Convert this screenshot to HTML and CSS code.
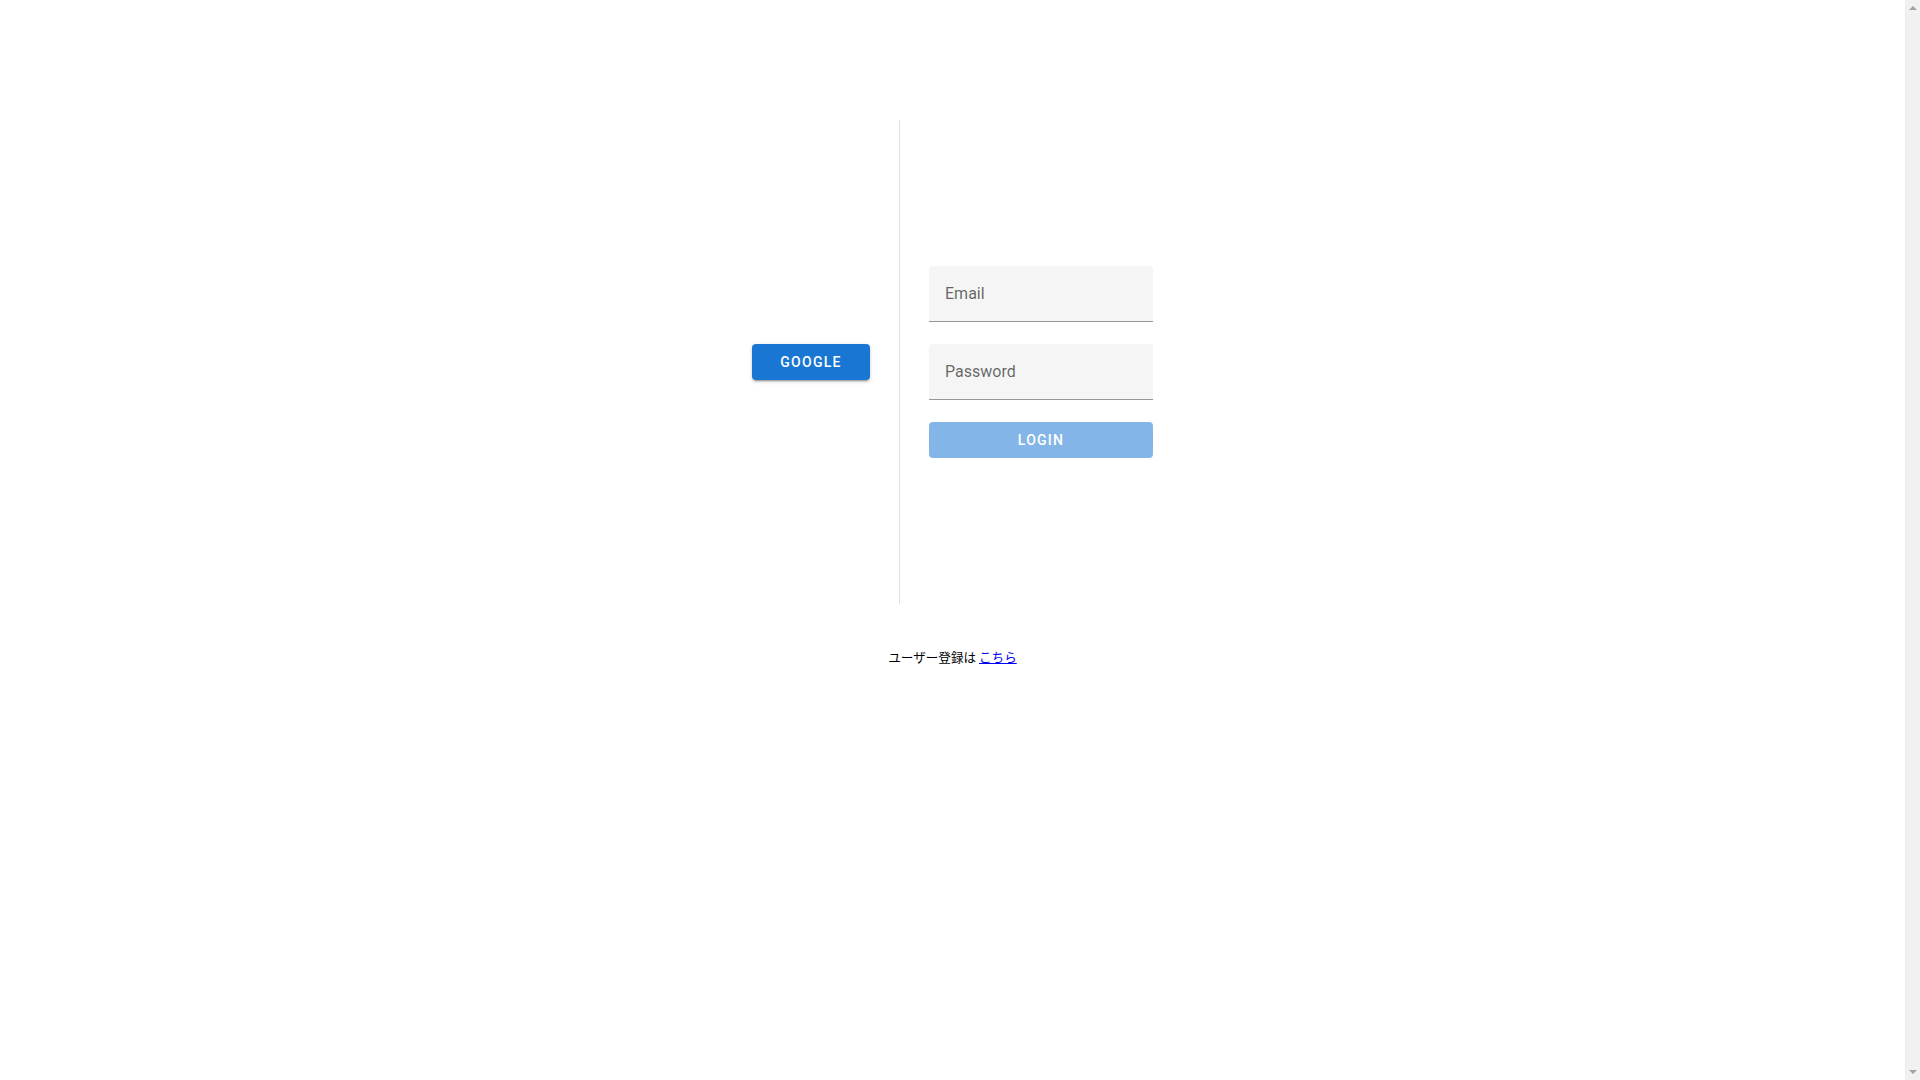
FILE: index.html
```html
<!DOCTYPE html>
<html lang="ja">
<head>
<meta charset="utf-8">
<title>Login</title>
<link rel="stylesheet" href="styles.css">
</head>
<body>
<div class="app">
  <div class="login-row">
    <div class="col-left">
      <button class="btn btn-google" type="button">Google</button>
    </div>
    <div class="divider"></div>
    <div class="col-right">
      <div class="field"><span class="label">Email</span></div>
      <div class="field"><span class="label">Password</span></div>
      <button class="btn btn-login" type="button">Login</button>
    </div>
  </div>
  <p class="register">ユーザー登録は <a href="#">こちら</a></p>
</div>
<div class="scrollbar">
  <span class="arrow arrow-up"></span>
  <span class="arrow arrow-down"></span>
</div>
</body>
</html>
```

FILE: styles.css
```css
html {
  overflow: hidden;
}
body {
  margin: 0;
  background: #ffffff;
  font-family: Roboto, "Noto Sans CJK JP", sans-serif;
}
.app {
  width: calc(100% - 15px);
  display: flex;
  flex-direction: column;
  align-items: center;
  padding-top: 120px;
}
.login-row {
  display: flex;
  align-items: center;
  height: 484px;
  gap: 29px;
}
.col-left {
  display: flex;
  justify-content: flex-end;
}
.divider {
  width: 1px;
  align-self: stretch;
  background: rgba(0, 0, 0, 0.12);
}
.col-right {
  width: 224px;
  display: flex;
  flex-direction: column;
}
.btn {
  height: 36px;
  border: none;
  border-radius: 4px;
  color: #ffffff;
  font-family: Roboto, sans-serif;
  font-weight: 500;
  font-size: 14px;
  letter-spacing: 1.25px;
  text-transform: uppercase;
  padding: 0 16px;
  cursor: pointer;
}
.btn-google {
  width: 118px;
  background: #1976d2;
  box-shadow: 0 3px 1px -2px rgba(0, 0, 0, 0.2), 0 2px 2px 0 rgba(0, 0, 0, 0.14), 0 1px 5px 0 rgba(0, 0, 0, 0.12);
}
.btn-login {
  width: 224px;
  margin-top: 22px;
  background: #84b5e8;
}
.field {
  height: 55px;
  background: #f5f5f5;
  border-radius: 4px 4px 0 0;
  border-bottom: 1px solid rgba(0, 0, 0, 0.38);
  display: flex;
  align-items: center;
  padding-left: 16px;
}
.field + .field {
  margin-top: 22px;
}
.label {
  font-size: 16px;
  color: rgba(0, 0, 0, 0.6);
}
.register {
  margin: 44px 0 0;
  font-family: "Noto Sans CJK JP", sans-serif;
  font-size: 12.6px;
  line-height: 18px;
  color: #000000;
}
.register a {
  color: #0000ee;
}
.scrollbar {
  position: fixed;
  top: 0;
  right: 0;
  width: 15px;
  height: 100%;
  background: #f1f1f1;
  border-left: 1px solid #ececec;
  box-sizing: border-box;
}
.arrow {
  position: absolute;
  left: 3px;
  width: 0;
  height: 0;
  border-left: 4px solid transparent;
  border-right: 4px solid transparent;
}
.arrow-up {
  top: 6px;
  border-bottom: 4px solid #a3a3a3;
}
.arrow-down {
  bottom: 6px;
  border-top: 4px solid #a3a3a3;
}
```
